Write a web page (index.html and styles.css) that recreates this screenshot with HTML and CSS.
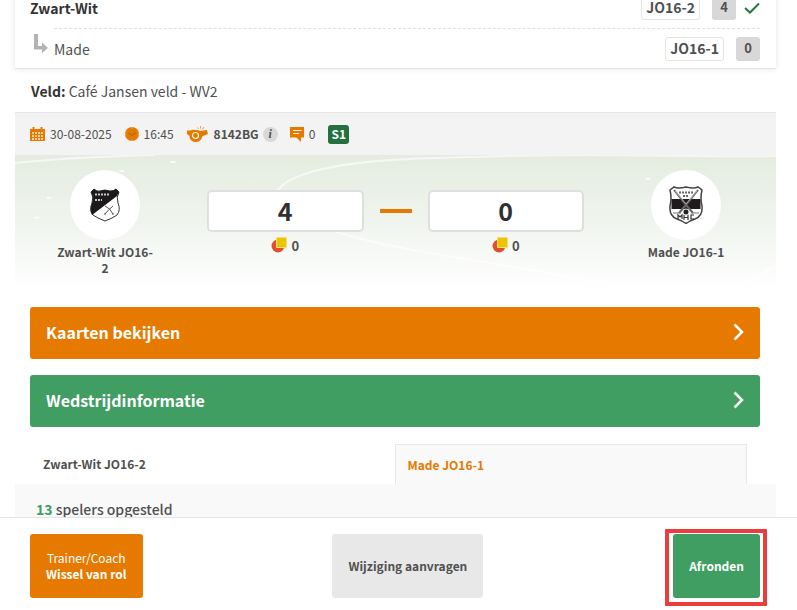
FILE: index.html
```
<!DOCTYPE html>
<html lang="nl">
<head>
    <meta charset="UTF-8">
    <meta name="viewport" content="width=device-width, initial-scale=1">
    <title>Wedstrijd</title>
    <link rel="stylesheet" href="styles.css">
</head>
<body>
<main class="page">
    <div class="match">
        <div class="clubs">
            <div class="club home">
                <span class="club-name">Zwart-Wit</span>
                <span class="tag">JO16-2</span>
                <span class="score">4</span>
                <svg class="check" width="16" height="12" viewBox="0 0 16 12"><path d="M1 6l5 4.500L15 1.500" fill="none" stroke="#24773f" stroke-width="2"/></svg>
            </div>
            <div class="club away">
                <svg class="arrow" width="14" height="20" viewBox="0 0 14 20"><path d="M0 0h4v12h4V8.500l6 5.500-6 5V15.500H0z" fill="#b3b3b3"/></svg>
                <div class="club-line">
                    <span class="club-name">Made</span>
                    <span class="tag">JO16-1</span>
                    <span class="score">0</span>
                </div>
            </div>
        </div>
        <p class="field"><b>Veld:</b> Café Jansen veld - WV2</p>
        <div class="meta">
            <svg width="15" height="14" viewBox="0 0 15 14">
                <path d="M0 2h15v12H0z" fill="#e67a00"/>
                <path d="M3 0h1v3H3zM11 0h1v3h-1z" fill="#e67a00" stroke="#e67a00"/>
                <path d="M2 5h2v2H2zM5 5h2v2H5zM8 5h2v2H8zM11 5h2v2h-2zM2 8h2v2H2zM5 8h2v2H5zM8 8h2v2H8zM11 8h2v2h-2zM2 11h2v2H2zM5 11h2v2H5zM8 11h2v2H8zM11 11h2v2h-2z" fill="#f6cfa0"/>
            </svg>
            <span class="date">30-08-2025</span>
            <svg width="14" height="14" viewBox="0 0 14 14">
                <circle cx="7" cy="7" r="7" fill="#e67a00"/>
                <path d="M3 6l4 2.500L11 5.500" fill="none" stroke="#b55f00"/>
                <path d="M7 0v1.500M7 12.500v1.500M0 7h1.500M12.500 7h1.500" stroke="#f4b36a"/>
            </svg>
            <span class="time">16:45</span>
            <svg width="21" height="16" viewBox="0 0 21 16">
                <path d="M0 4.500h3.500C5 3 7 4 9 4h2l2 1 7-1 1 4-6 2.500c0 3.500-3 5.500-6.500 5.500-3.500 0-6-2.500-6-6L0 8z" fill="#e67a00"/>
                <circle cx="8.500" cy="9.500" r="3" fill="none" stroke="#fff3e4" stroke-width="1.200"/>
                <path d="M11.500 3L10.500 1.500M13.500 2.500V0M15.500 3l1.500-2" stroke="#f0a04a"/>
            </svg>
            <b class="referee">8142BG</b>
            <i class="info">i</i>
            <svg width="14" height="15" viewBox="0 0 14 15">
                <path d="M0 0h14v10.500h-3V15l-4.500-4.500H0z" fill="#e67a00"/>
                <path d="M3 3.500h8.500M3 6.500h6" stroke="#fff3e4"/>
            </svg>
            <span class="notes">0</span>
            <span class="badge">S1</span>
        </div>
        <div class="scene">
            <svg class="pitch" viewBox="0 0 761 136" preserveAspectRatio="none">
                <g fill="none" stroke="#fff" stroke-opacity=".6" stroke-width="2">
                    <path d="M0 8Q60 2 140 0"/>
                    <path d="M260 40C272 12 350 5 420 3S520 0 570 0S700 2 761 1"/>
                    <path d="M260 40C262 70 370 92 440 103S560 125 600 130"/>
                    <path d="M761 113Q735 122 720 136"/>
                </g>
                <g fill="#fff" fill-opacity=".8">
                    <ellipse cx="158" cy="7" rx="3" ry="1"/>
                    <ellipse cx="34" cy="43" rx="3" ry="1"/>
                    <ellipse cx="22" cy="63" rx="3" ry="1"/>
                    <ellipse cx="107" cy="16" rx="3" ry="1"/>
                    <ellipse cx="633" cy="24" rx="3" ry="1"/>
                </g>
            </svg>
            <div class="team">
                <div class="crest">
                    <svg width="30" height="34" viewBox="0 0 30 34">
                        <path d="M4 1Q7 4 10 3Q15 1 20 3Q24 3 26 1L29 4Q26 9 28 15Q31 22 27 27Q23 30 15 33Q7 30 3 27Q-1 22 2 15Q4 9 1 4z" fill="#fff" stroke="#333"/>
                        <path d="M4 1Q7 4 10 3Q15 1 20 3Q24 3 26 1L29 4L27 8L2 27Q-1 22 2 15Q4 9 1 4z" fill="#1c1a1b"/>
                        <path d="M5 6.500h14M5 12h7" stroke="#c9c9c9" stroke-width="2" stroke-dasharray="2 1"/>
                        <path d="M15 18q5 2 8 8M23 18q-4 3-8 8M14 26h2M22 26h2" fill="none" stroke="#555"/>
                    </svg>
                </div>
                <b class="team-name">Zwart-Wit JO16-2</b>
            </div>
            <div class="result">
                <div class="side">
                    <input class="goals" type="text" value="4" aria-label="Doelpunten Zwart-Wit JO16-2">
                    <div class="cards">
                        <svg width="16" height="16" viewBox="0 0 16 16"><circle cx="7" cy="9" r="6.500" fill="#e0502f"/><path d="M5.500 .5h10v10h-10z" fill="#ecc500" stroke="#f7df70"/></svg>
                        <span>0</span>
                    </div>
                </div>
                <span class="dash"></span>
                <div class="side">
                    <input class="goals" type="text" value="0" aria-label="Doelpunten Made JO16-1">
                    <div class="cards">
                        <svg width="16" height="16" viewBox="0 0 16 16"><circle cx="7" cy="9" r="6.500" fill="#e0502f"/><path d="M5.500 .5h10v10h-10z" fill="#ecc500" stroke="#f7df70"/></svg>
                        <span>0</span>
                    </div>
                </div>
            </div>
            <div class="team">
                <div class="crest">
                    <svg width="34" height="38" viewBox="0 0 34 38">
                        <path d="M5 1Q9 3 17 1Q25 3 29 1L33 4Q31 12 33 20Q34 30 26 33Q20 35 17 37.500Q14 35 8 33Q0 30 1 20Q3 12 1 4z" fill="#fff" stroke="#444" stroke-width="1.500"/>
                        <path d="M2.500 13h29v10h-29z" fill="#1f1b1a"/>
                        <path d="M5 4l12 15L29 4M17 19l-7 8M17 19l7 8" fill="none" stroke="#666" stroke-width="2"/>
                        <path d="M6 5l11 13L28 5" fill="none" stroke="#ddd" stroke-width=".6"/>
                        <path d="M10 6.500h14M14 10h6" stroke="#666" stroke-width="2" stroke-dasharray="2 1"/>
                        <circle cx="17" cy="26" r="3" fill="#222" stroke="#ddd"/>
                        <path d="M4 27h8M22 27h8" stroke="#777"/>
                        <path d="M9 33v-4l2 2 2-2v4M15 29v5M19 29v5M15 31.500h4M25 29h-3v4h3" fill="none" stroke="#333" stroke-width="1.200"/>
                    </svg>
                </div>
                <b class="team-name">Made JO16-1</b>
            </div>
        </div>
    </div>
    <div class="actions">
        <button type="button" class="bar orange">Kaarten bekijken <svg width="11" height="18" viewBox="0 0 11 18"><path d="M1.500 1.500L9 9l-7.500 7.500" fill="none" stroke="#fff" stroke-width="2.500"/></svg></button>
        <button type="button" class="bar green">Wedstrijdinformatie <svg width="11" height="18" viewBox="0 0 11 18"><path d="M1.500 1.500L9 9l-7.500 7.500" fill="none" stroke="#fff" stroke-width="2.500"/></svg></button>
    </div>
    <div class="tabs">
        <button type="button" class="tab">Zwart-Wit JO16-2</button>
        <button type="button" class="tab active">Made JO16-1</button>
    </div>
    <div class="players"><b class="count">13</b> spelers opgesteld</div>
</main>
<footer class="footer">
    <button type="button" class="btn orange"><span class="role">Trainer/Coach</span>Wissel van rol</button>
    <button type="button" class="btn grey">Wijziging aanvragen</button>
    <button type="button" class="btn green marked">Afronden</button>
</footer>
</body>
</html>
```
FILE: styles.css
```
* {margin:0; padding:0; box-sizing:border-box;}

body {height:100vh; display:flex; flex-direction:column; overflow:hidden; background:#fff; color:#505050;
    font:14px/16px "Noto Sans CJK SC", "Open Sans", sans-serif;}
button, input {font:inherit; color:inherit; border:0;}
button {font-weight:bold; cursor:pointer;}
svg {display:block; flex:none;}

.orange {background:#e67a00; color:#fff;}
.green {background:#409e63; color:#fff;}
.grey {background:#e8e8e8;}

.page {flex:1; min-height:0; overflow:hidden; padding:0 21px 0 15px;}
.match {margin-top:-12px;}

.clubs {padding:0 16px 0 15px; border-bottom:1px solid #e4e4e4; box-shadow:0 0 6px rgba(0,0,0,.1);}
.club, .club-line {display:flex; align-items:center; height:40px;}
.club-name {flex:1;}
.home .club-name {font-weight:bold; color:#333;}
.arrow {margin:-8px 6px 0 4px;}
.club-line {flex:1; border-top:1px dashed #e0e0e0;}
.tag {height:24px; padding:0 4px; line-height:20px; font-weight:bold; border:1px solid #e4e4e4; border-radius:3px;}
.score {width:24px; height:24px; margin-left:12px; line-height:22px; text-align:center; font-size:13px; font-weight:bold;
    background:#d8d8d8; border-radius:3px;}
.check {margin-left:8px;}

.field {height:44px; padding:0 16px; line-height:44px; border-bottom:1px solid #e4e4e4;}
.field b {color:#333;}

.meta {display:flex; align-items:center; height:42px; padding:0 15px; background:#f3f3f3; font-size:12px;}
.date, .time {margin:0 13px 0 5px;}
.referee {margin:0 4px 0 6px;}
.info {width:15px; height:15px; margin-right:12px; border-radius:50%; background:#d8d8d8;
    font:italic bold 12px/15px "Liberation Serif", serif; text-align:center;}
.notes {margin:0 13px 0 5px;}
.badge {width:21px; height:19px; line-height:17px; text-align:center; font-weight:bold; color:#fff;
    background:#24713f; border-radius:3px;}

.scene {position:relative; display:flex; justify-content:space-between; height:135px; padding:15px 15px 0;
    background:linear-gradient(#e4ecdf, #f0f4ee 50%, #fff);}
.pitch {position:absolute; left:0; top:0; width:100%; height:100%;}
.team {position:relative; width:150px; display:flex; flex-direction:column; align-items:center; text-align:center;}
.crest {width:70px; height:70px; margin-bottom:4px; border-radius:50%; background:#fff;
    display:flex; align-items:center; justify-content:center;}
.team-name {max-width:100px; font-size:12px;}
.result {position:relative; flex:1; display:flex; gap:16px; padding:20px 27px 0;}
.side {flex:1; min-width:0;}
.goals {display:block; width:100%; height:42px; padding-bottom:2px; text-align:center; font-size:25px; font-weight:bold;
    color:#303030; background:#fff; border:2px solid #dfdfdf; border-radius:5px;}
.dash {width:32px; height:4px; margin-top:19px; background:#e67a00;}
.cards {display:flex; justify-content:center; gap:4px; margin-top:5px; font-size:13px; font-weight:bold; line-height:18px;}

.actions {display:flex; flex-direction:column; gap:16px; padding:17px 16px 17px 15px;}
.bar {display:flex; align-items:center; justify-content:space-between; height:52px; padding:0 16px 2px;
    font-size:16px; line-height:20px; border-radius:3px;}

.tabs {display:flex; gap:12px; padding:0 29px 0 15px;}
.tab {flex:1; height:40px; padding:0 12px; text-align:left; font-size:12px; background:none; border:1px solid transparent;}
.tab.active {color:#e67a00; background:#f9f9f9; border-color:#e8e8e8; border-bottom:0;}
.players {height:200px; padding:15px 21px; line-height:20px; font-weight:500; background:#f9f9f9;}
.count {color:#409e63;}

.footer {position:relative; display:flex; justify-content:space-between; padding:16px 37px 12px 30px;
    background:#fff; border-top:1px solid #e4e4e4;}
.btn {height:64px; padding:0 16px; font-size:12px; border-radius:3px;}
.role {display:block; font-weight:normal;}
.marked {position:relative;}
.marked::after {content:""; position:absolute; top:-5px; right:-7px; bottom:-8px; left:-8px; border:4px solid #ea3d3d;}
```
